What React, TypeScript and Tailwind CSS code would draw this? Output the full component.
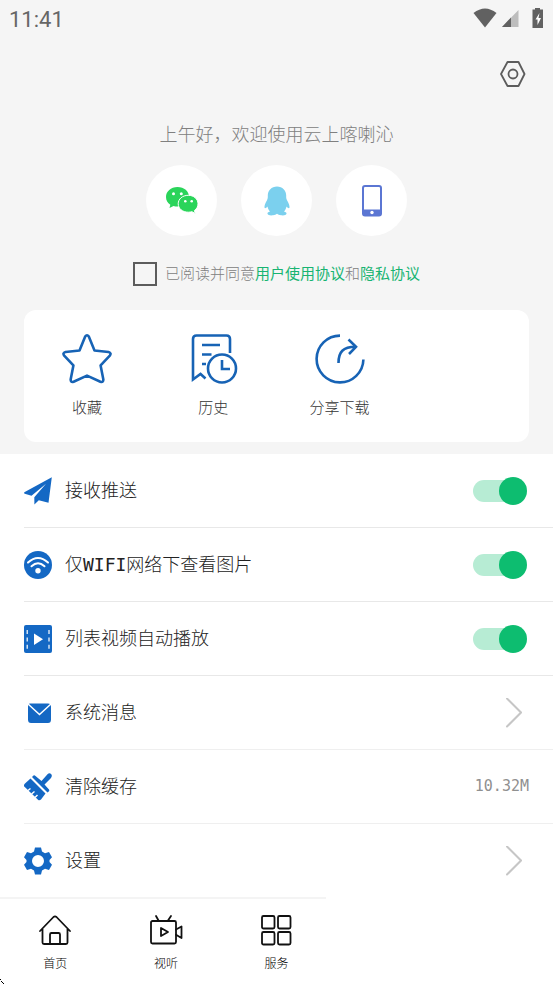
import { useState } from "react";
import type { ReactNode } from "react";

const BLUE = "#1468c4";

const StarIcon = () => (
    <svg width="50" height="50" viewBox="0 0 50 50" fill="none" stroke="#1763b5" strokeWidth="2.6" strokeLinejoin="round">
        <path d="M23.2 2.6Q25 0 26.8 2.6L32.500 16.500 46.500 18Q49.800 19 47.800 21.600L38.600 31.400 41.300 45.200Q41.600 48.600 38.400 47.800L25 41.600 11.600 47.800Q8.400 48.600 8.700 45.200L11.400 31.400 2.200 21.600Q.2 19 3.500 18L17.500 16.500Z" />
    </svg>
);

const HistoryIcon = () => (
    <svg width="50" height="50" viewBox="0 0 50 50" fill="none" stroke="#1763b5" strokeWidth="2.6">
        <path d="M42 19V5Q42 1.500 38.500 1.500H8.500Q5 1.500 5 5V45.500L12.500 40 17.500 44.500" />
        <path d="M14 11H32M14 20.500H23.500M14 30H18" />
        <circle cx="34" cy="34.500" r="14" />
        <path d="M34 26V35H42" />
    </svg>
);

const ShareIcon = () => (
    <svg width="50" height="50" viewBox="0 0 50 50" fill="none" stroke="#1763b5" strokeWidth="2.6">
        <path d="M25 1.600A23.400 23.400 0 1 0 48.400 25.500" />
        <path d="M23.500 29C23.500 18 28 12.800 40.500 12.800M33.500 5.500 41 12.800 34 20" />
    </svg>
);

const PlaneIcon = () => (
    <svg width="28" height="28" viewBox="0 0 28 28" fill={BLUE}>
        <path d="M27.800.3.3 15.200Q-.2 16.500.8 16.800L7.500 18.800 22 6.800 10.300 20.200 10.400 27.500 14.800 23.300 24.500 25.800Z" />
    </svg>
);

const WifiIcon = () => (
    <svg width="28" height="28" viewBox="0 0 28 28">
        <circle cx="14" cy="14" r="14" fill={BLUE} />
        <g fill="none" stroke="#fff" strokeWidth="2" strokeLinecap="round">
            <path d="M4 11.600Q14 2.400 24 11.600" />
            <path d="M7.500 15.200Q14 9.200 20.500 15.200" />
        </g>
        <circle cx="14" cy="19.800" r="2.700" fill="#fff" />
    </svg>
);

const VideoIcon = () => (
    <svg width="28" height="28" viewBox="0 0 28 28">
        <rect width="28" height="28" rx="2" fill={BLUE} />
        <path d="M3.200 5V24M25 5V24" stroke="#fff" strokeWidth="1.200" strokeDasharray="4 3.400" />
        <path d="M10 8.500V20L19 14.200Z" fill="#fff" />
    </svg>
);

const MailIcon = () => (
    <svg width="28" height="28" viewBox="0 0 28 28">
        <path d="M6 4.500H24Q27 4.500 27 7.500V20.500Q27 24 24 24H7Q4 24 4 20.500V7.500Q4 4.500 6 4.500Z" fill={BLUE} />
        <path d="M3.500 4.500 15.500 15.500 27.500 4.500" fill="none" stroke="#fff" strokeWidth="1.500" />
    </svg>
);

const BrushIcon = () => (
    <svg width="28" height="28" viewBox="0 0 28 28">
        <path d="M8 4 9.500 2.500Q10.500 2 11.500 3L17.500 8 23.500 1.200Q25.500-.500 27.300 1.200 28.500 3 27 5L20.500 11.500 25 16.500Q25.500 17.500 25 18.200L23.500 19.500Z" fill={BLUE} />
        <path d="M6.500 5.500 21.500 20.500 17 26.500Q15.500 28 14 26.800L0 13.200Q-.500 12 1 10.500Z" fill={BLUE} />
        <path d="M4 17.500 6.500 15.500M7.500 21 10.500 18.500M11 24.500 13.500 22" stroke="#fff" strokeWidth="1.500" />
    </svg>
);

const GearIcon = () => (
    <svg width="28" height="28" viewBox="0 0 28 28">
        <path
            fillRule="evenodd"
            fill={BLUE}
            d="M11 .500H17L18 4.500 21 6.200 25 5 28 10.200 25.500 13V15L28 17.800 25 23 21 21.800 18 23.500 17 27.500H11L10 23.500 7 21.800 3 23 0 17.800 2.500 15V13L0 10.200 3 5 7 6.200 10 4.500ZM14 8A6 6 0 1 0 14 20 6 6 0 1 0 14 8Z"
        />
    </svg>
);

const Chevron = () => (
    <svg width="16" height="30" viewBox="0 0 16 30" fill="none" stroke="#c6c6c6" strokeWidth="2" strokeLinecap="round">
        <path d="M1 .500 15 14.500 1 28.500" />
    </svg>
);

const HomeIcon = () => (
    <svg width="34" height="32" viewBox="0 0 34 32" fill="none" stroke="#111" strokeWidth="1.800" strokeLinejoin="round" strokeLinecap="round">
        <path d="M2 17 15.500 3Q17 1.800 18.500 3L32 17M4.500 15V28.500Q4.500 30 6 30H28Q29.500 30 29.500 28.500V15M12 30V20.500Q12 19 13.500 19H20.500Q22 19 22 20.500V30" />
    </svg>
);

const LiveIcon = () => (
    <svg width="34" height="32" viewBox="0 0 34 32" fill="none" stroke="#111" strokeWidth="1.800" strokeLinejoin="round" strokeLinecap="round">
        <rect x="2" y="7" width="25" height="22.500" rx="1.500" />
        <path d="M7 2 9.500 6.500M22 2 19 6.500M12 14V22L19 18ZM27 15.500 32.500 12.500V24L27 20.800" />
    </svg>
);

const GridIcon = () => (
    <svg width="34" height="32" viewBox="0 0 34 32" fill="none" stroke="#111" strokeWidth="1.800">
        <rect x="3" y="2" width="12.500" height="12.500" rx="1.500" />
        <rect x="19" y="2" width="12.500" height="12.500" rx="1.500" />
        <rect x="3" y="18" width="12.500" height="12.500" rx="1.500" />
        <rect x="19" y="18" width="12.500" height="12.500" rx="1.500" />
    </svg>
);

const WechatIcon = () => (
    <svg width="34" height="30" viewBox="0 0 34 30">
        <path d="M12.500 1C5.800 1 1 5.500 1 11c0 3.400 1.700 6 4.300 7.800L4.500 22l4-2c1.300.4 2.600.5 4 .5 6.700 0 11.500-4.200 11.500-9.700S19.200 1 12.500 1Z" fill="#2ad45a" />
        <path d="M23.300 9.300C17.500 9.300 13.200 13 13.200 17.800s4.300 8.400 10.100 8.400c1.300 0 2.500-.2 3.600-.5l3.400 1.800-.9-3C31.700 23 33 20.500 33 17.800c0-4.800-4.200-8.500-9.700-8.500Z" fill="#2ad45a" stroke="#fff" strokeWidth="1" />
        <g fill="#fff">
            <circle cx="8.500" cy="7.700" r="1.500" />
            <circle cx="16.300" cy="7.700" r="1.500" />
            <circle cx="20.300" cy="15.200" r="1.300" />
            <circle cx="26.700" cy="15.200" r="1.300" />
        </g>
    </svg>
);

const QQIcon = () => (
    <svg width="26" height="30" viewBox="0 0 26 30" fill="#7bd0ee">
        <path d="M13 .500C7.500.5 3.800 4.500 3.800 9.500c0 2 .1 2.800-.7 4.500C1 17.500.3 20 .5 21.500c.2 1.200 1.600.8 3-1 .4 2 1.200 3.600 2.500 5-1.800.5-2.800 1.300-2.500 2.300.5 1.600 3 1.800 5.500 1.500 1.800-.2 3-.8 4-1.500 1 .7 2.200 1.300 4 1.500 2.500.3 5 .1 5.500-1.500.3-1-.7-1.800-2.500-2.300 1.300-1.400 2.100-3 2.500-5 1.400 1.800 2.800 2.200 3 1 .2-1.500-.5-4-2.600-7.500-.8-1.700-.7-2.500-.7-4.500 0-5-3.700-9-9.200-9Z" />
    </svg>
);

const PhoneIcon = () => (
    <svg width="22" height="34" viewBox="0 0 22 34">
        <path fillRule="evenodd" fill="#5b76d3" d="M4 1H18Q21 1 21 4V29.500Q21 32.500 18 32.500H4Q1 32.500 1 29.500V4Q1 1 4 1ZM4 3Q3 3 3 4V25.500H19V4Q19 3 18 3Z" />
        <circle cx="11" cy="28.500" r="1.700" fill="#fff" />
    </svg>
);

const logins = [
    { name: "微信登录", icon: <WechatIcon /> },
    { name: "QQ登录", icon: <QQIcon /> },
    { name: "手机登录", icon: <PhoneIcon /> },
];

const shortcuts = [
    { label: "收藏", icon: <StarIcon /> },
    { label: "历史", icon: <HistoryIcon /> },
    { label: "分享下载", icon: <ShareIcon /> },
];

const switches = [
    { id: "push", label: "接收推送", icon: <PlaneIcon /> },
    { id: "wifi", label: "仅WIFI网络下查看图片", icon: <WifiIcon /> },
    { id: "autoplay", label: "列表视频自动播放", icon: <VideoIcon /> },
];

const links: { label: string; icon: ReactNode; value?: string }[] = [
    { label: "系统消息", icon: <MailIcon /> },
    { label: "清除缓存", icon: <BrushIcon />, value: "10.32M" },
    { label: "设置", icon: <GearIcon /> },
];

const tabs = [
    { label: "首页", icon: <HomeIcon /> },
    { label: "视听", icon: <LiveIcon /> },
    { label: "服务", icon: <GridIcon /> },
];

function StatusBar() {
    return (
        <div className="flex h-9 items-center justify-between pl-[9px] pr-2">
            <span className="pt-1 font-['Roboto',sans-serif] text-[22px] font-normal leading-8 text-[#666]">11:41</span>
            <div className="flex items-center gap-1">
                <svg width="24" height="22" viewBox="0 0 24 22" fill="#616161">
                    <path d="M.500 6Q12-3 23.500 6L12 20.500Z" />
                </svg>
                <svg width="18" height="20" viewBox="0 0 18 20">
                    <path d="M17.500 2V19H1Z" fill="#bdbdbd" />
                    <path d="M10 9.500V19H1Z" fill="#616161" />
                </svg>
                <svg className="ml-2" width="14" height="22" viewBox="0 0 14 22">
                    <path d="M4 1H9V2.500H12V21H1.500V2.500H4Z" fill="#616161" />
                    <path d="M8.500 6 4.500 12.500H6.500V18L10 11H7.500Z" fill="#fff" />
                </svg>
            </div>
        </div>
    );
}

function Toggle({ id }: { id: string }) {
    const [on, setOn] = useState(true);

    return (
        <input
            id={id}
            type="checkbox"
            role="switch"
            checked={on}
            onChange={() => setOn(!on)}
            className="relative h-7 w-[54px] shrink-0 cursor-pointer appearance-none before:absolute before:left-0 before:top-[3px] before:h-[22px] before:w-[50px] before:rounded-full before:bg-gray-300 after:absolute after:left-0 after:top-0 after:h-7 after:w-7 after:rounded-full after:bg-gray-400 checked:before:bg-[#b7ecd4] checked:after:left-auto checked:after:right-0 checked:after:bg-[#0dbd70]"
        />
    );
}

export default function App() {
    const [agreed, setAgreed] = useState(false);

    return (
        <div className="relative flex min-h-screen flex-col bg-white font-['DejaVu_Sans_Mono','Noto_Sans_CJK_SC',monospace] font-light text-[#222]">
            <header className="bg-[#f5f5f5] px-6 pb-3">
                <div className="-mx-6">
                    <StatusBar />
                </div>
                <div className="mt-6 flex justify-end">
                    <button aria-label="选项" className="cursor-pointer">
                        <svg width="30" height="28" viewBox="0 0 30 28" fill="none" stroke="#5c5c5c" strokeWidth="1.800" strokeLinejoin="round">
                            <path d="M8.500 2H19.500L25.500 14 19.500 26H8.500L2 14Z" />
                            <circle cx="14" cy="14" r="4.500" />
                        </svg>
                    </button>
                </div>
                <p className="mt-[33px] text-center text-[18px] leading-7 text-[#808080]">{"上午好\uff0c欢迎使用云上喀喇沁"}</p>
                <div className="mt-4 flex justify-center gap-6">
                    {logins.map((l) => (
                        <button
                            key={l.name}
                            aria-label={l.name}
                            className="flex h-[71px] w-[71px] cursor-pointer items-center justify-center rounded-full bg-white"
                        >
                            {l.icon}
                        </button>
                    ))}
                </div>
                <div className="mt-[26px] flex items-center justify-center gap-2 text-[15px] leading-6 text-[#808080]">
                    <input
                        id="agree"
                        type="checkbox"
                        checked={agreed}
                        onChange={() => setAgreed(!agreed)}
                        className="h-6 w-6 appearance-none border-2 border-[#5c5c5c] checked:bg-[#0dbd70]"
                    />
                    <div>
                        <label htmlFor="agree">已阅读并同意</label>
                        <a href="#terms" className="font-normal text-[#18b472]">用户使用协议</a>和
                        <a href="#privacy" className="font-normal text-[#18b472]">隐私协议</a>
                    </div>
                </div>
                <div className="mt-6 grid grid-cols-4 rounded-xl bg-white pb-[22px] pt-6">
                    {shortcuts.map((s) => (
                        <button key={s.label} className="flex cursor-pointer flex-col items-center gap-3 text-[15px] leading-6 text-[#333]">
                            {s.icon}
                            {s.label}
                        </button>
                    ))}
                </div>
            </header>

            <main className="pl-6 text-[18px]">
                {switches.map((s) => (
                    <div key={s.id} className="flex h-[74px] items-center border-b border-[#e8e8e8] pr-[26px]">
                        {s.icon}
                        <label htmlFor={s.id} className="ml-[13px] flex-1 cursor-pointer">
                            {s.label}
                        </label>
                        <Toggle id={s.id} />
                    </div>
                ))}
                {links.map((l) => (
                    <button
                        key={l.label}
                        className="flex h-[74px] w-full cursor-pointer items-center border-b border-[#efefef] text-left last:h-[73px] last:border-0"
                    >
                        {l.icon}
                        <span className="ml-[13px] flex-1">{l.label}</span>
                        {l.value ? (
                            <span className="pr-6 text-[15px] text-[#909090]">{l.value}</span>
                        ) : (
                            <span className="pr-[31px]">
                                <Chevron />
                            </span>
                        )}
                    </button>
                ))}
            </main>

            <nav>
                <div className="h-0.5 w-[59%] bg-[#f4f4f4]" />
                <div className="grid grid-cols-5 pb-2.5 pt-[15px]">
                    {tabs.map((t) => (
                        <a key={t.label} href="#" className="flex flex-col items-center gap-2 text-[12px] leading-5 text-black">
                            {t.icon}
                            {t.label}
                        </a>
                    ))}
                </div>
            </nav>

            {/* pointer tip */}
            <svg className="absolute bottom-0 left-0" width="5" height="5" viewBox="0 0 5 5">
                <path d="M0 0H1V1H0ZM1 2H2V3H1ZM2 3H3V4H2ZM3 4H4V5H3Z" fill="#000" />
            </svg>
        </div>
    );
}
